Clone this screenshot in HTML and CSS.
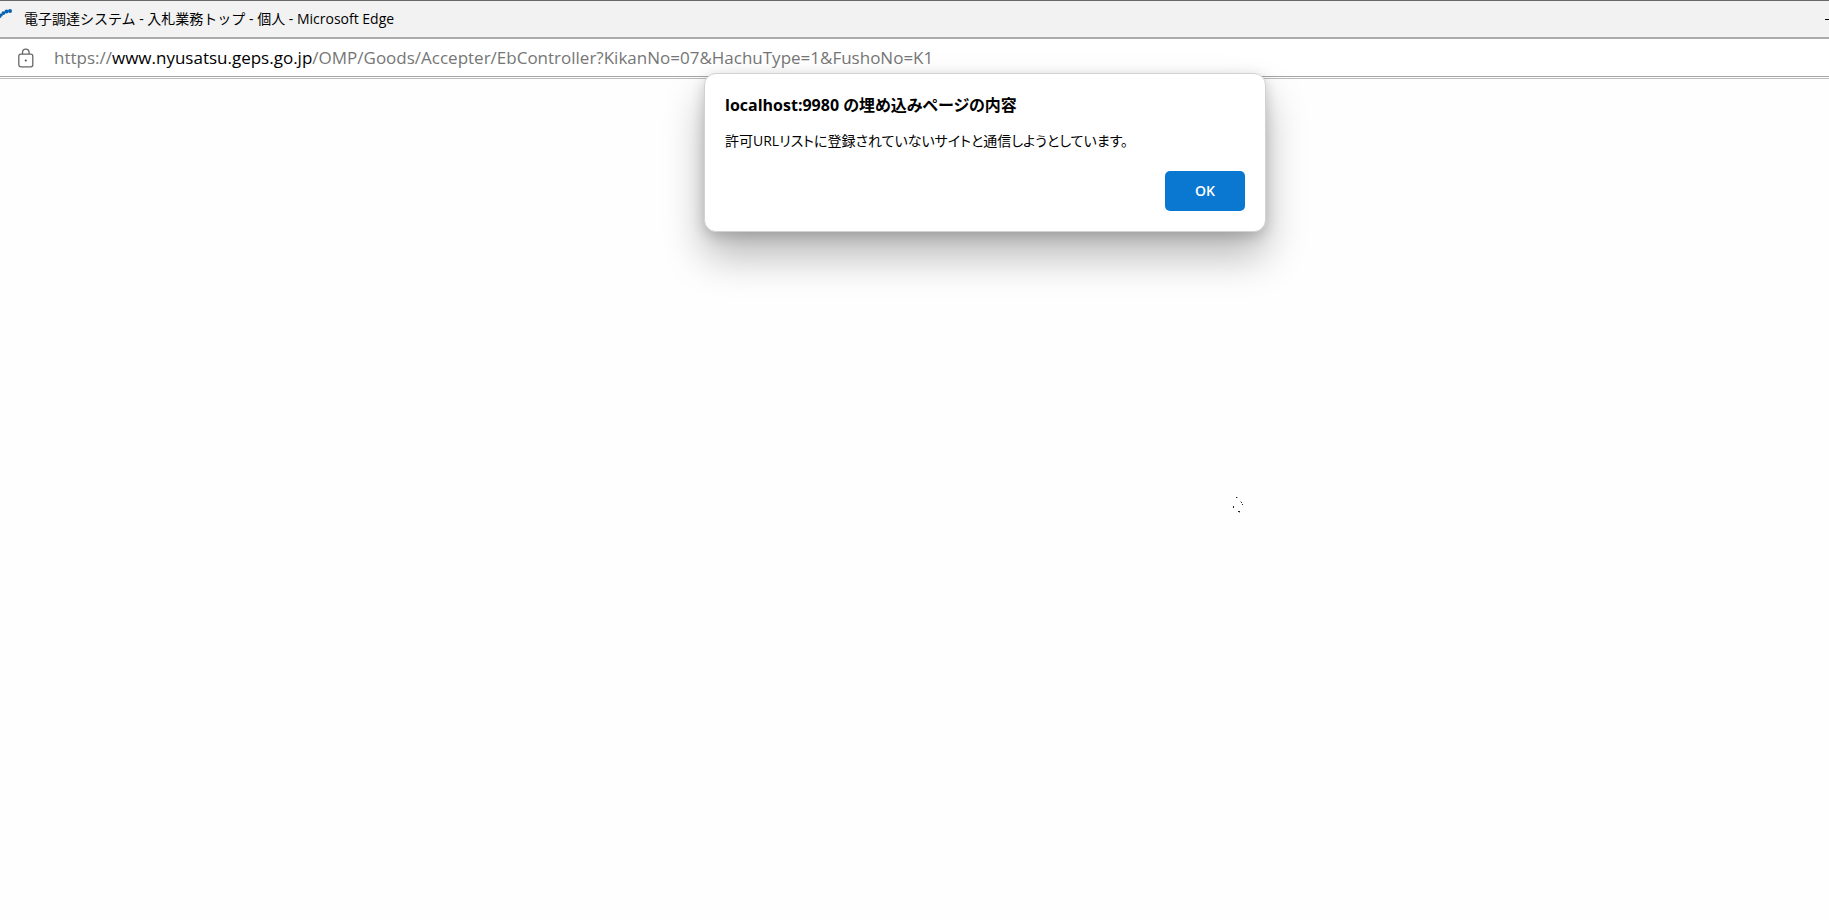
FILE: index.html
```
<!DOCTYPE html>
<html lang="ja">
<head>
<meta charset="utf-8">
<title>電子調達システム - 入札業務トップ - 個人</title>
<link rel="stylesheet" href="styles.css">
</head>
<body>
<header class="titlebar">
  <svg class="loading" width="13" height="20" viewBox="0 0 13 20" aria-hidden="true">
    <g fill="#0a63ae"><circle cx="10" cy="3" r="2"/><circle cx="6.5" cy="3.5" r="2"/><circle cx="3.4" cy="5.1" r="1.9"/><circle cx="1.2" cy="7" r="1.6"/><circle cx="0" cy="8.8" r="1.3"/></g>
  </svg>
  <h1 class="title">電子調達システム - 入札業務トップ - 個人 - Microsoft Edge</h1>
  <button class="minimize" type="button" aria-label="最小化"></button>
</header>
<div class="addressbar">
  <svg class="lock" width="16" height="20" viewBox="0 0 16 20" fill="none" stroke="#666" stroke-width="1.3" aria-hidden="true">
    <rect x="0.8" y="6.2" width="14" height="12.6" rx="2"/>
    <path d="M4.5 6V4.4a3.3 3.3 0 0 1 6.6 0V6"/>
    <circle cx="7.8" cy="12.5" r="1.1" fill="#555" stroke="none"/>
  </svg>
  <p class="url">https://<span class="host">www.nyusatsu.geps.go.jp</span>/OMP/Goods/Accepter/EbController?KikanNo=07&amp;HachuType=1&amp;FushoNo=K1</p>
</div>
<main class="page">
  <div class="dialog" role="alertdialog" aria-labelledby="dialog-title" aria-describedby="dialog-text">
    <h2 class="dialog-title" id="dialog-title">localhost:9980 の埋め込みページの内容</h2>
    <p class="dialog-text" id="dialog-text">許可URLリストに登録されていないサイトと通信しようとしています。</p>
    <button class="ok" type="button">OK</button>
  </div>
  <svg class="spinner" width="14" height="20" viewBox="0 0 14 20" fill="#222" aria-hidden="true">
    <path d="M4 1h1v1H4zM9 6h1v1H9zM10 8h1v1h-1zM1 10h1v2H1zM6 15h2v1H6z"/>
    <path d="M5 1h1v1H5zM8 5h1v1H8zM7 16h1v1H7z" fill="#aab"/>
  </svg>
</main>
</body>
</html>
```
FILE: styles.css
```
* { box-sizing: border-box; }

body {
  margin: 0;
  min-height: 100vh;
  display: flex;
  flex-direction: column;
  background: #fefefe;
  color: #000;
  font-family: "Open Sans", "Noto Sans CJK JP", sans-serif;
}

h1, h2, p { margin: 0; font-weight: 400; white-space: nowrap; }

.titlebar {
  height: 39px;
  display: flex;
  align-items: center;
  gap: 11px;
  background: #f2f2f2;
  border-top: 1px solid #6b686b;
  border-bottom: 2px solid #ababab;
}

.loading { align-self: flex-start; margin-top: 7px; }

.title { flex: 1; font-size: 14px; line-height: 20px; }

.minimize {
  width: 4px;
  height: 20px;
  padding: 0;
  border: 0;
  background: linear-gradient(#000, #000) center / 100% 1px no-repeat;
}

.addressbar {
  height: 38px;
  display: flex;
  align-items: center;
  gap: 20px;
  padding-left: 18px;
  background: #fff;
  border-bottom: 1px solid #a6a6a6;
}

.url { font-size: 17px; line-height: 24px; color: #767676; }
.host { color: #000; }

.page {
  position: relative;
  flex: 1;
  margin-top: 1px;
  border-top: 1px solid #bcbcbc;
}

.dialog {
  position: absolute;
  top: -6px;
  left: 704px;
  width: 562px;
  display: flex;
  flex-direction: column;
  padding: 20px;
  background: #fff;
  border: 1px solid #d2d2d2;
  border-radius: 12px;
  box-shadow: 0 24px 40px rgba(0, 0, 0, 0.28), 0 4px 14px rgba(0, 0, 0, 0.18);
  font-feature-settings: "palt";
}

.dialog-title { font-size: 16px; line-height: 22px; font-weight: 700; }
.dialog-text { margin-top: 15px; font-size: 14px; line-height: 20px; }

.ok {
  align-self: flex-end;
  width: 80px;
  height: 40px;
  margin-top: 20px;
  padding: 0;
  border: 0;
  border-radius: 5px;
  background: #0a78d1;
  color: #fff;
  font: 600 14px/20px "Open Sans", sans-serif;
}

.spinner { position: absolute; top: 417px; left: 1232px; }
```
